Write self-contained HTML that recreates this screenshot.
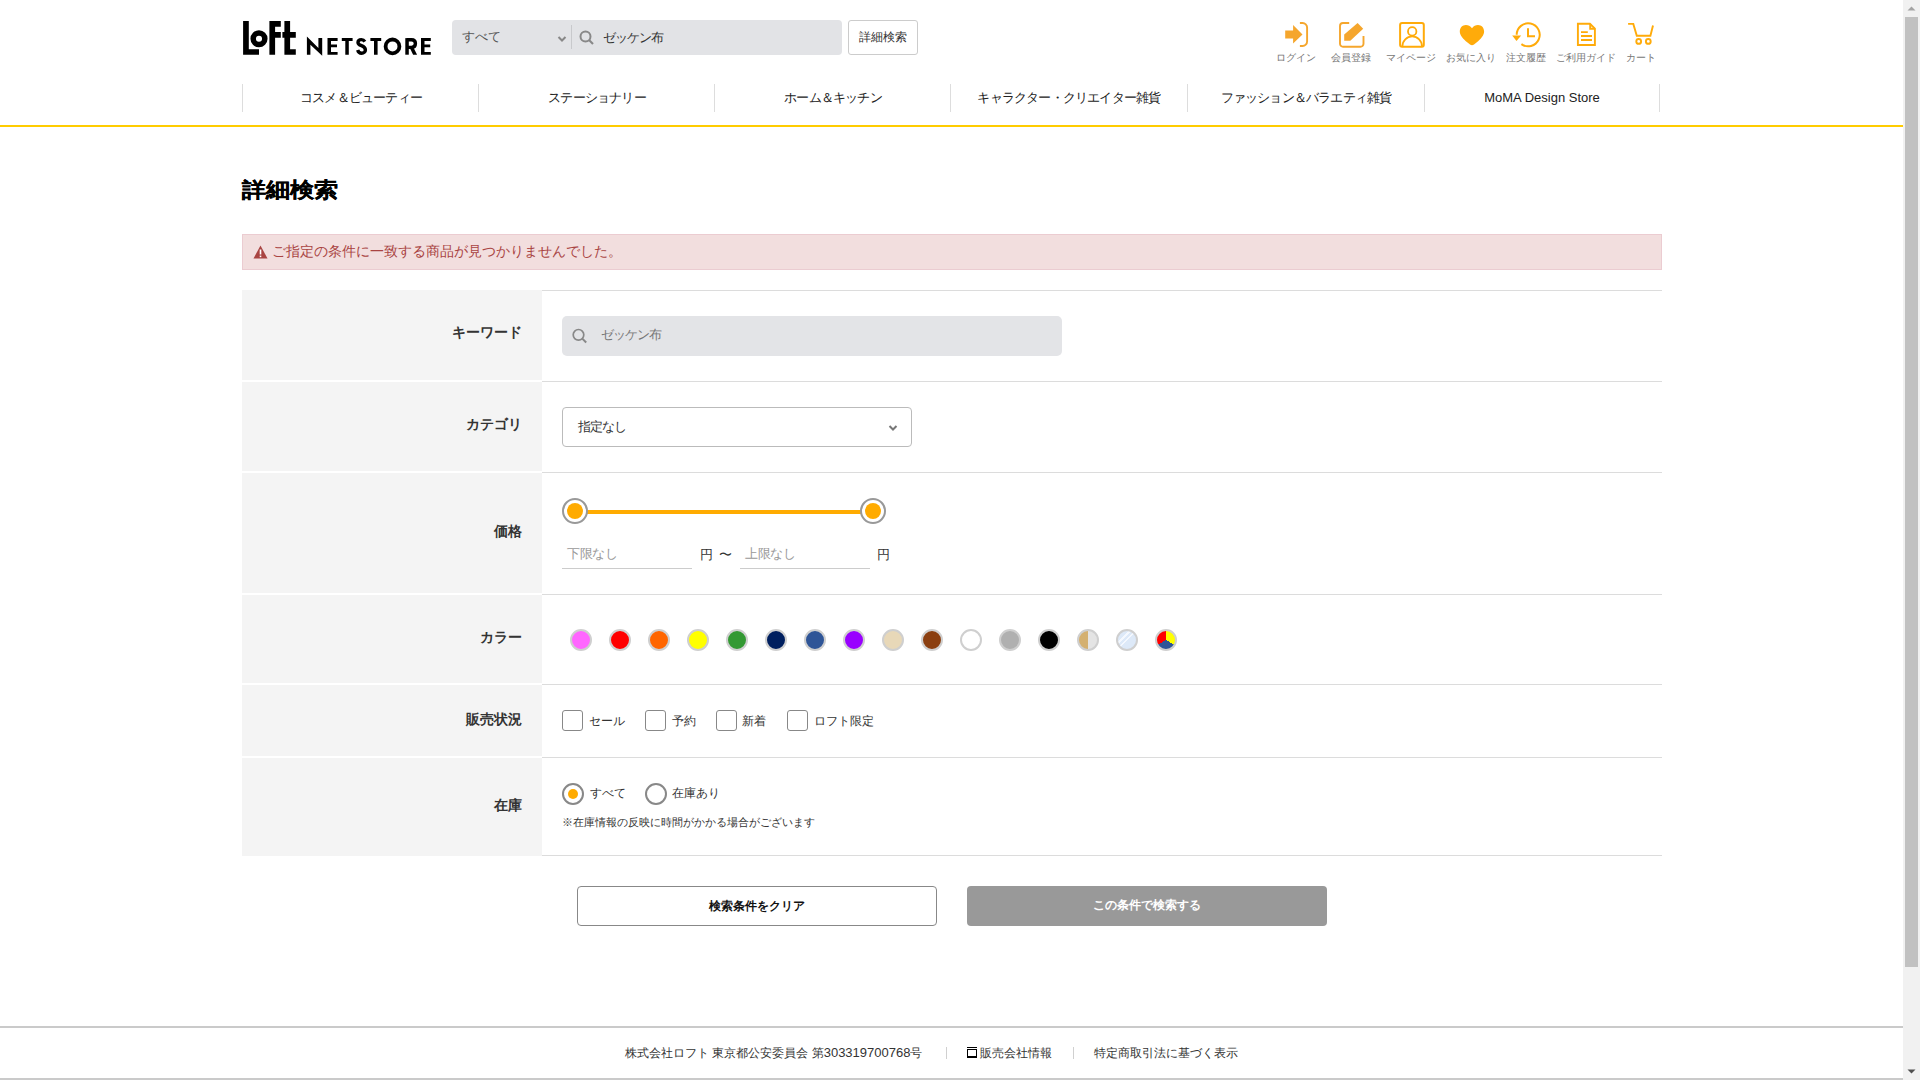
<!DOCTYPE html>
<html lang="ja">
<head>
<meta charset="utf-8">
<style>
*{box-sizing:border-box;margin:0;padding:0}
html,body{width:1920px;height:1080px;overflow:hidden;background:#fff}
body{font-family:"Liberation Sans",sans-serif;color:#333;position:relative}
.abs{position:absolute}
.page{position:absolute;left:0;top:0;width:1903px;height:1080px}
/* header */
.sbox{left:452px;top:20px;width:390px;height:35px;background:#e2e3e6;border-radius:4px}
.sbox .cat{position:absolute;left:10px;top:8px;font-size:13px;color:#555}
.sbox .div{position:absolute;left:119px;top:5px;width:1px;height:24px;background:#c8c9cc}
.sbox .kw{position:absolute;left:151px;top:9px;font-size:13px;letter-spacing:-1px;color:#333}
.dbtn{left:848px;top:20px;width:70px;height:35px;border:1px solid #ccc;border-radius:3px;background:#fff;font-size:12px;color:#333;text-align:center;line-height:33px}
.ilabel{position:absolute;top:51px;font-size:10px;color:#777;text-align:center;width:80px;white-space:nowrap}
.nav{left:242px;top:84px;width:1418px;height:28px}
.nav div{position:absolute;top:0;height:28px;border-left:1px solid #ddd;width:237px;text-align:center;font-size:13px;letter-spacing:-0.8px;color:#222;line-height:28px;white-space:nowrap}
.yline{left:0;top:125px;width:1903px;height:2px;background:#ffcc00}
h1{position:absolute;left:242px;top:176px;font-size:24px;font-weight:bold;color:#000;white-space:nowrap;transform:scaleY(0.87);transform-origin:0 0;-webkit-text-stroke:0.3px #000}
.alert{left:242px;top:234px;width:1420px;height:36px;background:#f2dede;border:1px solid #ebccd1;color:#a94442;font-size:14px}
.alert span{position:absolute;left:29px;top:8px;white-space:nowrap}
/* table */
.lab{position:absolute;left:242px;width:300px;background:#f4f4f4}
.lab span{position:absolute;right:20px;font-size:14px;font-weight:bold;color:#333;white-space:nowrap}
.hl{position:absolute;left:542px;width:1120px;height:1px;background:#dcdcdc}
.kwbox{left:562px;top:316px;width:500px;height:40px;background:#e3e4e7;border-radius:5px}
.kwbox span{position:absolute;left:39px;top:10px;font-size:13px;letter-spacing:-0.9px;color:#777}
.sel{left:562px;top:407px;width:350px;height:40px;border:1px solid #bbb;border-radius:4px;background:#fff}
.sel span{position:absolute;left:15px;top:10px;font-size:13px;letter-spacing:-0.9px;color:#333}
.pin{position:absolute;top:545px;height:24px;border-bottom:1px solid #ccc;font-size:13px;letter-spacing:-0.4px;color:#999}
.dot{position:absolute;top:629px;width:22px;height:22px;border-radius:50%;border:2px solid #cfcfcf}
.cb{position:absolute;top:710px;width:21px;height:21px;border:1px solid #888;border-radius:3px;background:#fff}
.cbl{position:absolute;top:713px;font-size:12px;color:#333;white-space:nowrap}
.rd{position:absolute;top:783px;width:22px;height:22px;border:2px solid #888;border-radius:50%;background:#fff}
.btn{position:absolute;top:886px;width:360px;height:40px;border-radius:4px;font-size:12px;font-weight:bold;text-align:center;line-height:38px}
.foot1{left:0;top:1026px;width:1903px;height:2px;background:#cacaca}
.foot2{left:0;top:1078px;width:1903px;height:2px;background:#cacaca}
.ftxt{position:absolute;top:1045px;font-size:12px;color:#333;white-space:nowrap}
.fsep{position:absolute;top:1047px;width:1px;height:12px;background:#d0d0d0}
/* scrollbar */
.sb{left:1903px;top:0;width:17px;height:1080px;background:#f1f1f1}
.thumb{left:1905px;top:17px;width:13px;height:950px;background:#c1c1c1}
</style>
</head>
<body>
<div class="page">
<!-- logo -->
<svg class="abs" style="left:238px;top:16px" width="64" height="44" viewBox="0 0 64 44">
<g fill="#000">
<path d="M5.1 5.1H10.8V33.2H21V38.7H5.1Z"/>
<circle cx="21" cy="22.8" r="5.8" fill="none" stroke="#000" stroke-width="5.5"/>
<path d="M31.4 5.1H42.8V10.8H37.1V16.1H42.8V21.8H37.1V38.7H31.4Z"/>
<path d="M46.4 5.1H52.1V16.1H57.8V21.8H52.1V33.2H57.8V38.7H46.4V21.8H44.4V16.1H46.4Z"/>
</g></svg>
<svg class="abs" style="left:302px;top:32px" width="134" height="28" viewBox="0 0 134 28">
<g fill="#000">
<polygon points="4.9,4.5 16.4,16 16.4,6.1 20.2,6.1 20.2,23.7 8.4,12.8 8.4,22.7 4.9,22.7"/>
<path d="M25.5 6.1H35.6V9.1H29V12.4H35V15.2H29V19.9H35.6V22.7H25.5Z"/>
<path d="M39.8 6.1H50.6V9.1H46.8V22.7H43.3V9.1H39.8Z"/>
<path d="M68.4 6.1H79.2V9.1H75.6V22.7H72V9.1H68.4Z"/>
<rect x="103.3" y="6.1" width="3.5" height="16.6"/>
<polygon points="107.5,15.2 111.3,15.2 115.1,22.7 111.1,22.7"/>
<path d="M119 6.1H128.8V9.1H122.5V12.4H128.2V15.2H122.5V19.9H128.8V22.7H119Z"/>
</g>
<g fill="none" stroke="#000" stroke-width="3.4">
<path d="M62.8 9.6C62 8.2 60.7 7.6 59.4 7.6C57.4 7.6 56 8.8 56 10.4C56 12.2 57.6 13 59.5 13.7C61.8 14.6 63.4 15.7 63.4 17.9C63.4 19.9 61.7 21.2 59.6 21.2C57.6 21.2 56.2 19.9 55.7 18"/>
<circle cx="90.5" cy="14.4" r="6.9" stroke-width="3.8"/>
<path d="M105 7.8H109.5C112 7.8 113.4 9.4 113.4 11.6C113.4 13.9 112 15.4 109.5 15.4H105"/>
</g></svg>
<!-- search -->
<div class="abs sbox"><span class="cat">すべて</span>
<svg class="abs" style="left:105px;top:15px" width="10" height="8" viewBox="0 0 10 8"><path d="M1.5 2L5 5.5L8.5 2" fill="none" stroke="#888" stroke-width="2"/></svg>
<div class="div"></div>
<svg class="abs" style="left:126px;top:9px" width="18" height="18" viewBox="0 0 18 18"><circle cx="7.5" cy="7.5" r="5" fill="none" stroke="#888" stroke-width="2"/><path d="M11 11L15 15" stroke="#888" stroke-width="2.2"/></svg>
<span class="kw">ゼッケン布</span></div>
<div class="abs dbtn">詳細検索</div>
<!-- icons -->
<svg class="abs" style="left:1280px;top:18px" width="90" height="32" viewBox="0 0 90 32">
<g fill="#f5a62d"><polygon points="5.2,12.4 13.1,12.4 13.1,7 22.5,16.4 13.1,25.5 13.1,20.4 5.2,20.4"/>
<polygon points="64.2,16.4 77.6,4.9 83.2,10.8 70.3,22.7 64.2,22.7"/></g>
<g fill="none" stroke="#f5a62d" stroke-width="1.9">
<path d="M19.9 5H22.6A4.5 4.5 0 0 1 27.1 9.5V23.5A4.5 4.5 0 0 1 22.6 28H19.9"/>
<path d="M69.2 5H63A3 3 0 0 0 60 8V25.8A3 3 0 0 0 63 28.8H80.5A3 3 0 0 0 83.5 25.8V18"/>
</g></svg>
<svg class="abs" style="left:1395px;top:18px" width="150" height="32" viewBox="0 0 150 32">
<g fill="none" stroke="#ffab0a" stroke-width="2">
<rect x="5.1" y="5.1" width="23.7" height="23.7" rx="2"/>
<circle cx="17.2" cy="13.4" r="4.2" stroke-width="1.8"/>
<path d="M7.4 28.2A9.8 9.8 0 0 1 27 28.2" stroke-width="1.8"/>
<path d="M121.7 16.8A11.5 11.5 0 1 1 126.4 26.07"/>
<path d="M133 10.2V18.3H140"/>
</g>
<path fill="#ffab0a" d="M77 10.2C75.3 7.9 73.3 6.9 70.9 6.9C67.4 6.9 64.8 9.7 64.8 13.4C64.8 17.4 68 20.6 72.5 24.6L75 26.5Q77 28 79 26.5L81.5 24.6C86 20.6 89.1 17.4 89.1 13.4C89.1 9.7 86.5 6.9 83 6.9C80.6 6.9 78.6 7.9 77 10.2Z"/>
<polygon fill="#ffab0a" points="117.2,17.6 126.2,17.6 121.5,23"/>
</svg>
<svg class="abs" style="left:1570px;top:18px" width="90" height="32" viewBox="0 0 90 32">
<g fill="none" stroke="#ffab0a" stroke-width="1.9">
<path d="M7.9 5.8H19.9L24.9 10.6V27H7.9Z"/>
<path d="M20.2 5.8V10.8H24.9"/>
<path d="M11 14.1H17.8M11 18H22M11 22H22"/>
<path d="M58.1 5.9H63.3L66.8 17.8H80.4L83 7.5"/>
<circle cx="68.7" cy="23.4" r="2.4"/><circle cx="78.3" cy="23.4" r="2.4"/>
</g></svg>
<span class="ilabel" style="left:1256px">ログイン</span>
<span class="ilabel" style="left:1311px">会員登録</span>
<span class="ilabel" style="left:1371px">マイページ</span>
<span class="ilabel" style="left:1431px">お気に入り</span>
<span class="ilabel" style="left:1486px">注文履歴</span>
<span class="ilabel" style="left:1546px">ご利用ガイド</span>
<span class="ilabel" style="left:1601px">カート</span>
<!-- nav -->
<div class="abs nav">
<div style="left:0">コスメ＆ビューティー</div>
<div style="left:236px">ステーショナリー</div>
<div style="left:472px">ホーム＆キッチン</div>
<div style="left:708px">キャラクター・クリエイター雑貨</div>
<div style="left:945px">ファッション＆バラエティ雑貨</div>
<div style="left:1182px;width:236px;border-right:1px solid #ddd;letter-spacing:0">MoMA Design Store</div>
</div>
<div class="abs yline"></div>
<h1>詳細検索</h1>
<div class="abs alert">
<svg class="abs" style="left:10px;top:10px" width="15" height="14" viewBox="0 0 15 14"><path d="M7.5 0.5L14.5 13.5H0.5Z" fill="#a94442"/><rect x="6.7" y="4.5" width="1.6" height="5" fill="#fff"/><rect x="6.7" y="10.6" width="1.6" height="1.6" fill="#fff"/></svg>
<span>ご指定の条件に一致する商品が見つかりませんでした。</span></div>
<!-- table -->
<div class="hl" style="top:290px;height:1px"></div>
<div class="lab" style="top:290px;height:90px"><span style="top:34px">キーワード</span></div>
<div class="hl" style="top:381px"></div>
<div class="lab" style="top:382px;height:89px"><span style="top:34px">カテゴリ</span></div>
<div class="hl" style="top:472px"></div>
<div class="lab" style="top:473px;height:120px"><span style="top:50px">価格</span></div>
<div class="hl" style="top:594px"></div>
<div class="lab" style="top:595px;height:88px"><span style="top:34px">カラー</span></div>
<div class="hl" style="top:684px"></div>
<div class="lab" style="top:685px;height:71px"><span style="top:26px">販売状況</span></div>
<div class="hl" style="top:757px"></div>
<div class="lab" style="top:758px;height:98px"><span style="top:39px">在庫</span></div>
<div class="hl" style="top:855px"></div>

<div class="abs kwbox">
<svg class="abs" style="left:9px;top:11px" width="18" height="18" viewBox="0 0 18 18"><circle cx="7.5" cy="7.8" r="5.3" fill="none" stroke="#888" stroke-width="1.7"/><path d="M11.3 11.6L15.2 15.5" stroke="#888" stroke-width="2"/></svg>
<span>ゼッケン布</span></div>
<div class="abs sel"><span>指定なし</span>
<svg class="abs" style="left:325px;top:16px" width="10" height="8" viewBox="0 0 10 8"><path d="M1.5 2L5 5.5L8.5 2" fill="none" stroke="#777" stroke-width="2"/></svg></div>

<!-- slider -->
<div class="abs" style="left:575px;top:510px;width:298px;height:4px;background:#ffab00"></div>
<div class="abs" style="left:562px;top:498px;width:26px;height:26px;border-radius:50%;border:2px solid #999;background:#fff"><div class="abs" style="left:3px;top:3px;width:16px;height:16px;border-radius:50%;background:#ffab00"></div></div>
<div class="abs" style="left:860px;top:498px;width:26px;height:26px;border-radius:50%;border:2px solid #999;background:#fff"><div class="abs" style="left:3px;top:3px;width:16px;height:16px;border-radius:50%;background:#ffab00"></div></div>
<div class="pin" style="left:562px;width:130px;padding-left:5px">下限なし</div>
<span class="abs" style="left:700px;top:546px;font-size:13px">円</span>
<span class="abs" style="left:719px;top:546px;font-size:13px">〜</span>
<div class="pin" style="left:740px;width:130px;padding-left:5px">上限なし</div>
<span class="abs" style="left:877px;top:546px;font-size:13px">円</span>

<!-- colors -->
<div class="dot" style="left:570px;background:#ff66ff"></div>
<div class="dot" style="left:609px;background:#ff0000"></div>
<div class="dot" style="left:648px;background:#ff6600"></div>
<div class="dot" style="left:687px;background:#ffff00"></div>
<div class="dot" style="left:726px;background:#339933"></div>
<div class="dot" style="left:765px;background:#001f5f"></div>
<div class="dot" style="left:804px;background:#2f5597"></div>
<div class="dot" style="left:843px;background:#9900ff"></div>
<div class="dot" style="left:882px;background:#e8d8b8"></div>
<div class="dot" style="left:921px;background:#8b3f10"></div>
<div class="dot" style="left:960px;background:#fff"></div>
<div class="dot" style="left:999px;background:#b0b0b0"></div>
<div class="dot" style="left:1038px;background:#000"></div>
<div class="dot" style="left:1077px;background:linear-gradient(90deg,#d4b070 50%,#e4e4e4 50%)"></div>
<div class="dot" style="left:1116px;background:linear-gradient(135deg,#dde9f8 30%,#f4f8fe 30%,#f4f8fe 37%,#dde9f8 37%,#dde9f8 45%,#f4f8fe 45%,#f4f8fe 52%,#dde9f8 52%)"></div>
<div class="dot" style="left:1155px;background:conic-gradient(#ffff00 0deg 120deg,#2f5597 120deg 240deg,#ff0000 240deg 360deg)"></div>

<!-- checkboxes -->
<div class="cb" style="left:562px"></div><span class="cbl" style="left:589px">セール</span>
<div class="cb" style="left:645px"></div><span class="cbl" style="left:672px">予約</span>
<div class="cb" style="left:716px"></div><span class="cbl" style="left:742px">新着</span>
<div class="cb" style="left:787px"></div><span class="cbl" style="left:814px">ロフト限定</span>

<div class="rd" style="left:562px"><div class="abs" style="left:4px;top:4px;width:10px;height:10px;border-radius:50%;background:#ffab00"></div></div>
<span class="cbl" style="left:590px;top:785px">すべて</span>
<div class="rd" style="left:645px"></div>
<span class="cbl" style="left:672px;top:785px">在庫あり</span>
<span class="abs" style="left:562px;top:815px;font-size:11px;color:#333;white-space:nowrap">※在庫情報の反映に時間がかかる場合がございます</span>

<div class="btn" style="left:577px;border:1px solid #888;background:#fff;color:#111">検索条件をクリア</div>
<div class="btn" style="left:967px;background:#999;color:#fff">この条件で検索する</div>

<div class="abs foot1"></div>
<span class="ftxt" style="left:625px">株式会社ロフト 東京都公安委員会 第<span style="font-size:13px">303319700768</span>号</span>
<div class="fsep" style="left:946px"></div>
<div class="abs" style="left:967px;top:1047px;width:10px;height:1px;background:#000"></div><div class="abs" style="left:967px;top:1049px;width:10px;height:9px;border:1.2px solid #000;border-bottom-width:2px"></div>
<span class="ftxt" style="left:980px">販売会社情報</span>
<div class="fsep" style="left:1073px"></div>
<span class="ftxt" style="left:1094px">特定商取引法に基づく表示</span>
<div class="abs foot2"></div>
</div>
<!-- scrollbar -->
<div class="abs sb"></div>
<svg class="abs" style="left:1903px;top:0" width="17" height="17" viewBox="0 0 17 17"><path d="M4.5 10.5L8.5 6.5L12.5 10.5Z" fill="#a3a3a3"/></svg>
<div class="abs thumb"></div>
<svg class="abs" style="left:1903px;top:1063px" width="17" height="17" viewBox="0 0 17 17"><path d="M4.5 6.5L8.5 10.5L12.5 6.5Z" fill="#505050"/></svg>
</body>
</html>
